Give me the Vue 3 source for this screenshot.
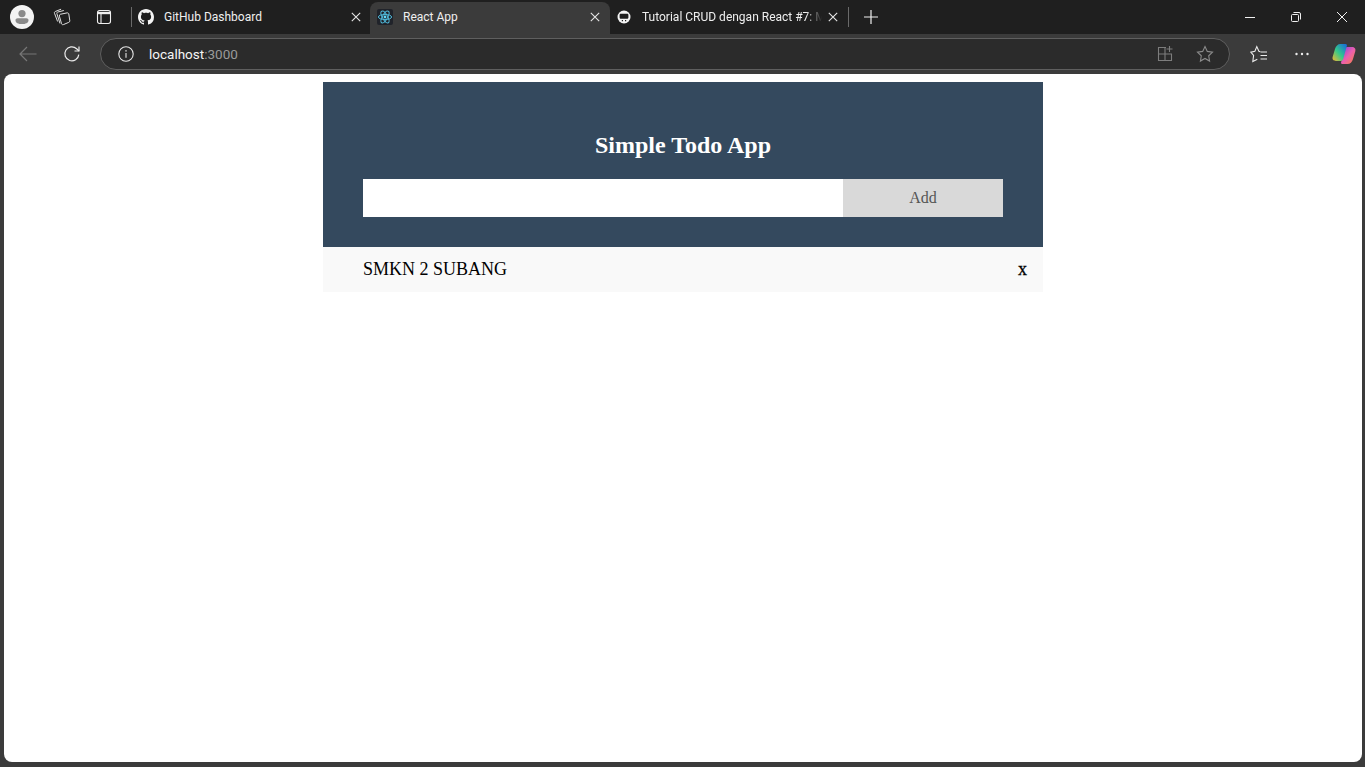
<script setup>
import { ref } from 'vue';

const todos = ref([{ id: 1, text: 'SMKN 2 SUBANG' }]);
const draft = ref('');

function addTodo() {
  if (!draft.value.trim()) return;
  todos.value.push({ id: Date.now(), text: draft.value });
  draft.value = '';
}

function removeTodo(id) {
  todos.value = todos.value.filter((t) => t.id !== id);
}
</script>

<template>
  <div class="browser">
    <div class="tabstrip">
      <div class="slot slot-avatar">
        <svg width="24" height="24" viewBox="0 0 24 24">
          <circle cx="12" cy="12" r="12" fill="#f3f3f3" />
          <circle cx="12" cy="8.600" r="3.600" fill="#8a8a8a" />
          <path d="M5.500 15.200c0-1.200 1-1.900 2.200-1.900h8.600c1.200 0 2.200.7 2.200 1.900 0 2.600-2.900 3.900-6.500 3.900s-6.500-1.300-6.500-3.900z" fill="#8a8a8a" />
        </svg>
      </div>
      <div class="slot slot-collections">
        <svg width="18" height="18" viewBox="0 0 18 18" fill="none" stroke="#e0e0e0" stroke-width="1">
          <path d="M8.200 6.300l6.800-1.400c.9-.2 1.600.3 1.800 1.100l1 6.700c.1.800-.3 1.500-1.100 1.700l-5.300 2.200c-.9.300-1.700-.1-1.900-1l-2.100-7.400c-.2-.9.100-1.700.800-1.900z" transform="translate(-1 0)" />
          <path d="M7 15.500 3.900 5.700c-.2-.8.200-1.500 1-1.700l5.900-1.500" />
          <path d="M4.600 13.500 1.500 5.300c-.3-.8.100-1.500.8-1.800L8.100 1.200" />
        </svg>
      </div>
      <div class="slot slot-sidebar">
        <svg width="16" height="16" viewBox="0 0 16 16" fill="none" stroke="#f0f0f0" stroke-width="1.100">
          <rect x="1.500" y="1.500" width="13" height="13" rx="2.200" />
          <path d="M1.500 4h13" stroke-width="2.400" />
          <path d="M5 5v9.500" />
        </svg>
      </div>
      <div class="tab-sep first-sep"></div>

      <div class="tab tab-github">
        <svg class="favicon" width="16" height="16" viewBox="0 0 16 16" fill="#f5f5f5">
          <path d="M8 0C3.580 0 0 3.580 0 8c0 3.540 2.290 6.530 5.470 7.590.4.070.55-.17.55-.38 0-.19-.01-.82-.01-1.490-2.010.37-2.530-.49-2.690-.94-.09-.23-.48-.94-.82-1.130-.28-.15-.68-.52-.01-.53.63-.01 1.080.58 1.230.82.72 1.210 1.870.87 2.330.66.07-.52.28-.87.51-1.070-1.780-.2-3.640-.89-3.640-3.950 0-.87.31-1.590.82-2.150-.08-.2-.36-1.020.08-2.120 0 0 .67-.21 2.200.82.64-.18 1.320-.27 2-.27.68 0 1.360.09 2 .27 1.530-1.040 2.200-.82 2.200-.82.44 1.100.16 1.920.08 2.120.51.56.82 1.270.82 2.150 0 3.070-1.870 3.750-3.650 3.950.29.25.54.73.54 1.480 0 1.070-.01 1.930-.01 2.200 0 .21.15.46.55.38A8.013 8.013 0 0016 8c0-4.420-3.580-8-8-8z" />
        </svg>
        <span class="tab-title">GitHub Dashboard</span>
        <svg class="tab-close" width="10" height="10" viewBox="0 0 10 10" stroke="#e6e6e6" stroke-width="1.100">
          <path d="M.8.8l8.400 8.400M9.200.8L.8 9.200" />
        </svg>
      </div>

      <div class="tab tab-active">
        <svg class="favicon" width="16" height="16" viewBox="0 0 16 16" fill="none">
          <rect width="16" height="16" rx="2" fill="#20232a" />
          <g stroke="#4fb8d8" stroke-width="1">
            <ellipse cx="8" cy="8" rx="6.600" ry="2.600" />
            <ellipse cx="8" cy="8" rx="6.600" ry="2.600" transform="rotate(60 8 8)" />
            <ellipse cx="8" cy="8" rx="6.600" ry="2.600" transform="rotate(120 8 8)" />
          </g>
          <circle cx="8" cy="8" r="1.400" fill="#61dafb" />
        </svg>
        <span class="tab-title">React App</span>
        <svg class="tab-close" width="10" height="10" viewBox="0 0 10 10" stroke="#e6e6e6" stroke-width="1.100">
          <path d="M.8.8l8.400 8.400M9.200.8L.8 9.200" />
        </svg>
      </div>

      <div class="tab tab-tutorial">
        <svg class="favicon" width="14" height="14" viewBox="0 0 14 14">
          <circle cx="7" cy="7" r="6.500" fill="#f5f5f5" />
          <path d="M2.600 5c0-.7.5-1.200 1.200-1.200h6.400c.7 0 1.200.5 1.200 1.200v2.400c0 .8-.6 1.300-1.300 1.300H3.900c-.7 0-1.300-.5-1.300-1.300z" fill="#1f1f1f" />
          <path d="M4.800 10h1.200v1.200H4.800zM8 10h1.200v1.200H8z" fill="#1f1f1f" />
        </svg>
        <span class="tab-title faded">Tutorial CRUD dengan React #7: M</span>
        <svg class="tab-close" width="10" height="10" viewBox="0 0 10 10" stroke="#e6e6e6" stroke-width="1.100">
          <path d="M.8.8l8.400 8.400M9.200.8L.8 9.200" />
        </svg>
      </div>
      <div class="tab-sep"></div>
      <div class="slot slot-plus">
        <svg width="14" height="14" viewBox="0 0 14 14" stroke="#f0f0f0" stroke-width="1.200">
          <path d="M7 0v14M0 7h14" />
        </svg>
      </div>

      <div class="window-controls">
        <div class="slot win-btn">
          <svg width="10" height="10" viewBox="0 0 10 10" stroke="#f0f0f0" stroke-width="1"><path d="M0 5.500h10" /></svg>
        </div>
        <div class="slot win-btn">
          <svg width="10" height="10" viewBox="0 0 10 10" fill="none" stroke="#f0f0f0" stroke-width="1">
            <rect x=".5" y="2.500" width="7" height="7" rx="1" />
            <path d="M2.500 .5h5.500a1.500 1.500 0 0 1 1.500 1.500v5.500" />
          </svg>
        </div>
        <div class="slot win-btn">
          <svg width="10" height="10" viewBox="0 0 10 10" stroke="#f0f0f0" stroke-width="1"><path d="M0 0l10 10M10 0L0 10" /></svg>
        </div>
      </div>
    </div>

    <div class="toolbar">
      <div class="slot tool-back">
        <svg width="18" height="16" viewBox="0 0 18 16" fill="none" stroke="#777" stroke-width="1.200">
          <path d="M17.500 8H1M8 1 1 8l7 7" />
        </svg>
      </div>
      <div class="slot tool-reload">
        <svg width="18" height="18" viewBox="0 0 18 18" fill="none" stroke="#ececec" stroke-width="1.200">
          <path d="M15.800 9.600A7 7 0 1 1 13.600 3.700L16 6" />
          <path d="M16 1.500V6h-4.500" />
        </svg>
      </div>
      <div class="address">
        <svg class="info" width="16" height="16" viewBox="0 0 16 16" fill="none" stroke="#e6e6e6" stroke-width="1.100">
          <circle cx="8" cy="8" r="7.200" />
          <path d="M8 7v4.800" />
          <path d="M8 4.200v1.300" stroke-width="1.400" />
        </svg>
        <span class="url"><span class="host">localhost</span>:3000</span>
        <svg class="addr-split" width="16" height="16" viewBox="0 0 16 16" fill="none" stroke="#7d7d7d" stroke-width="1.100">
          <path d="M9 1.500H1.500v13h13V8H1.500M8 1.500v13" />
          <path d="M12.500 0v6M9.500 3h6" />
        </svg>
        <svg class="addr-star" width="18" height="18" viewBox="0 0 18 18" fill="none" stroke="#8a8a8a" stroke-width="1.100">
          <path d="M9 1.500l2.300 4.900 5.200.7-3.800 3.700.9 5.300L9 13.500l-4.600 2.600.9-5.300L1.500 7.100l5.200-.7z" />
        </svg>
      </div>
      <div class="slot tool-favs">
        <svg width="18" height="18" viewBox="0 0 18 18" fill="none" stroke="#ececec" stroke-width="1.100">
          <path d="M10.300 6.600 8.900 6.200 6.800 1.600 4.900 6.200.8 7.100 3.600 10.500 2.800 16.500 7.300 14.300" />
          <path d="M10.500 7h6.500M10.500 10.500h6.500M10.500 14h6.500" />
        </svg>
      </div>
      <div class="slot tool-more">
        <svg width="14" height="4" viewBox="0 0 14 4" fill="#ececec">
          <circle cx="1.500" cy="2" r="1.200" /><circle cx="7" cy="2" r="1.200" /><circle cx="12.500" cy="2" r="1.200" />
        </svg>
      </div>
      <div class="slot tool-copilot">
        <svg width="24" height="22" viewBox="0 0 24 22">
          <defs>
            <linearGradient id="cpA" x1="0" y1="1" x2="1" y2="0">
              <stop offset="0" stop-color="#f5b82e" />
              <stop offset=".45" stop-color="#35c98a" />
              <stop offset="1" stop-color="#1565e0" />
            </linearGradient>
            <linearGradient id="cpB" x1="0" y1="0" x2="1" y2="1">
              <stop offset="0" stop-color="#7f3fe0" />
              <stop offset=".5" stop-color="#ea5fb0" />
              <stop offset="1" stop-color="#f9813f" />
            </linearGradient>
          </defs>
          <path d="M15.500 21h-5c-1 0-1.700-.8-1.400-1.800L12.800 6c.4-1.400 1.500-2 2.800-2H20c2.500 0 4 1.800 3.300 4.200L21 16c-.8 3-2.800 5-5.500 5z" fill="url(#cpB)" />
          <path d="M8.500 1h5c1 0 1.700.8 1.400 1.800L11.200 16c-.4 1.400-1.500 2-2.800 2H4c-2.500 0-4-1.800-3.300-4.200L3 6c.8-3 2.800-5 5.500-5z" fill="url(#cpA)" />
        </svg>
      </div>
    </div>

    <div class="viewport">
      <div class="todo-app">
        <header class="todo-head">
          <h2 class="todo-title">Simple Todo App</h2>
          <form class="todo-form" @submit.prevent="addTodo">
            <input v-model="draft" class="todo-input" type="text" />
            <button class="todo-add" type="submit">Add</button>
          </form>
        </header>
        <ul class="todo-list">
          <li v-for="todo in todos" :key="todo.id" class="todo-item">
            <span>{{ todo.text }}</span>
            <span class="todo-remove" @click="removeTodo(todo.id)">x</span>
          </li>
        </ul>
      </div>
    </div>
  </div>
</template>

<style>
html,
body {
  margin: 0;
  height: 100%;
  overflow: hidden;
}
</style>

<style scoped>
.browser {
  width: 1365px;
  height: 767px;
  display: flex;
  flex-direction: column;
  background: #3b3b3b;
  font-family: Roboto, "Noto Sans", sans-serif;
  overflow: hidden;
}
.slot {
  display: flex;
  align-items: center;
  justify-content: center;
  flex: none;
}

/* tab strip */
.tabstrip {
  height: 34px;
  flex: none;
  display: flex;
  align-items: stretch;
  background: #1f1f1f;
}
.slot-avatar {
  width: 44px;
}
.slot-collections {
  width: 36px;
}
.slot-sidebar {
  width: 48px;
}
.tab-sep {
  width: 1px;
  height: 20px;
  align-self: center;
  background: #6a6a6a;
  flex: none;
}
.first-sep {
  margin: 0 0 0 3px;
}
.tab {
  display: flex;
  align-items: center;
  flex: none;
  color: #efefef;
  font-size: 12px;
  box-sizing: border-box;
}
.tab-title {
  flex: 1;
  min-width: 0;
  white-space: nowrap;
  overflow: hidden;
  padding-bottom: 1px;
}
.tab-github {
  width: 238px;
  padding: 0 9px 0 6px;
}
.tab-github .tab-title {
  margin-left: 10px;
}
.tab-active {
  width: 240px;
  margin-top: 2px;
  height: 32px;
  padding: 0 10px 2px 7px;
  background: #3b3b3b;
  border-radius: 8px 8px 0 0;
}
.tab-active .tab-title {
  margin-left: 10px;
}
.tab-tutorial {
  width: 238px;
  padding: 0 10px 0 7px;
}
.tab-tutorial .tab-title {
  margin-left: 11px;
  margin-right: 1px;
}
.faded {
  -webkit-mask-image: linear-gradient(to right, #000 164px, transparent 180px);
  mask-image: linear-gradient(to right, #000 164px, transparent 180px);
}
.favicon,
.tab-close {
  flex: none;
}
.slot-plus {
  width: 43px;
}
.window-controls {
  margin-left: auto;
  display: flex;
}
.win-btn {
  width: 46px;
}

/* toolbar */
.toolbar {
  height: 40px;
  flex: none;
  display: flex;
  align-items: center;
  background: #3b3b3b;
}
.tool-back {
  width: 56px;
}
.tool-reload {
  width: 32px;
}
.address {
  flex: none;
  width: 1130px;
  height: 32px;
  margin-left: 12px;
  display: flex;
  align-items: center;
  box-sizing: border-box;
  padding: 0 15px 0 17px;
  background: #2b2b2b;
  border: 1px solid #5f5f5f;
  border-radius: 16px;
}
.url {
  margin-left: 15px;
  font-size: 13.500px;
  color: #9a9a9a;
}
.host {
  color: #f5f5f5;
}
.addr-split {
  margin-left: auto;
}
.addr-star {
  margin-left: 23px;
}
.tool-favs {
  width: 58px;
}
.tool-more {
  width: 28px;
}
.tool-copilot {
  width: 55px;
}

/* page */
.viewport {
  flex: 1;
  margin: 0 3px 5px 4px;
  background: #fff;
  border-radius: 8px;
  font-family: "Liberation Serif", "Times New Roman", serif;
  overflow: hidden;
}
.todo-app {
  width: 720px;
  margin: 8px auto 0;
}
.todo-head {
  background: #34495e;
  padding: 30px 40px;
  color: #fff;
  text-align: center;
}
.todo-title {
  margin: 20px 0;
  font-size: 24px;
  line-height: 27px;
  font-weight: bold;
}
.todo-form {
  display: flex;
}
.todo-input {
  flex: none;
  width: 480px;
  height: 38px;
  box-sizing: border-box;
  border: 0;
  border-radius: 0;
  padding: 0 10px;
  background: #fff;
  font-size: 16px;
  outline: none;
}
.todo-add {
  flex: none;
  width: 160px;
  height: 38px;
  border: 0;
  border-radius: 0;
  background: #d9d9d9;
  color: #555;
  font-family: "Liberation Serif", serif;
  font-size: 16px;
  cursor: pointer;
}
.todo-list {
  list-style: none;
  margin: 0;
  padding: 0;
}
.todo-item {
  height: 45px;
  box-sizing: border-box;
  display: flex;
  align-items: center;
  justify-content: space-between;
  padding: 0 16px 0 40px;
  background: #f9f9f9;
  font-size: 18px;
  color: #000;
}
.todo-remove {
  -webkit-text-stroke: 0.3px #000;
  cursor: pointer;
}
</style>
